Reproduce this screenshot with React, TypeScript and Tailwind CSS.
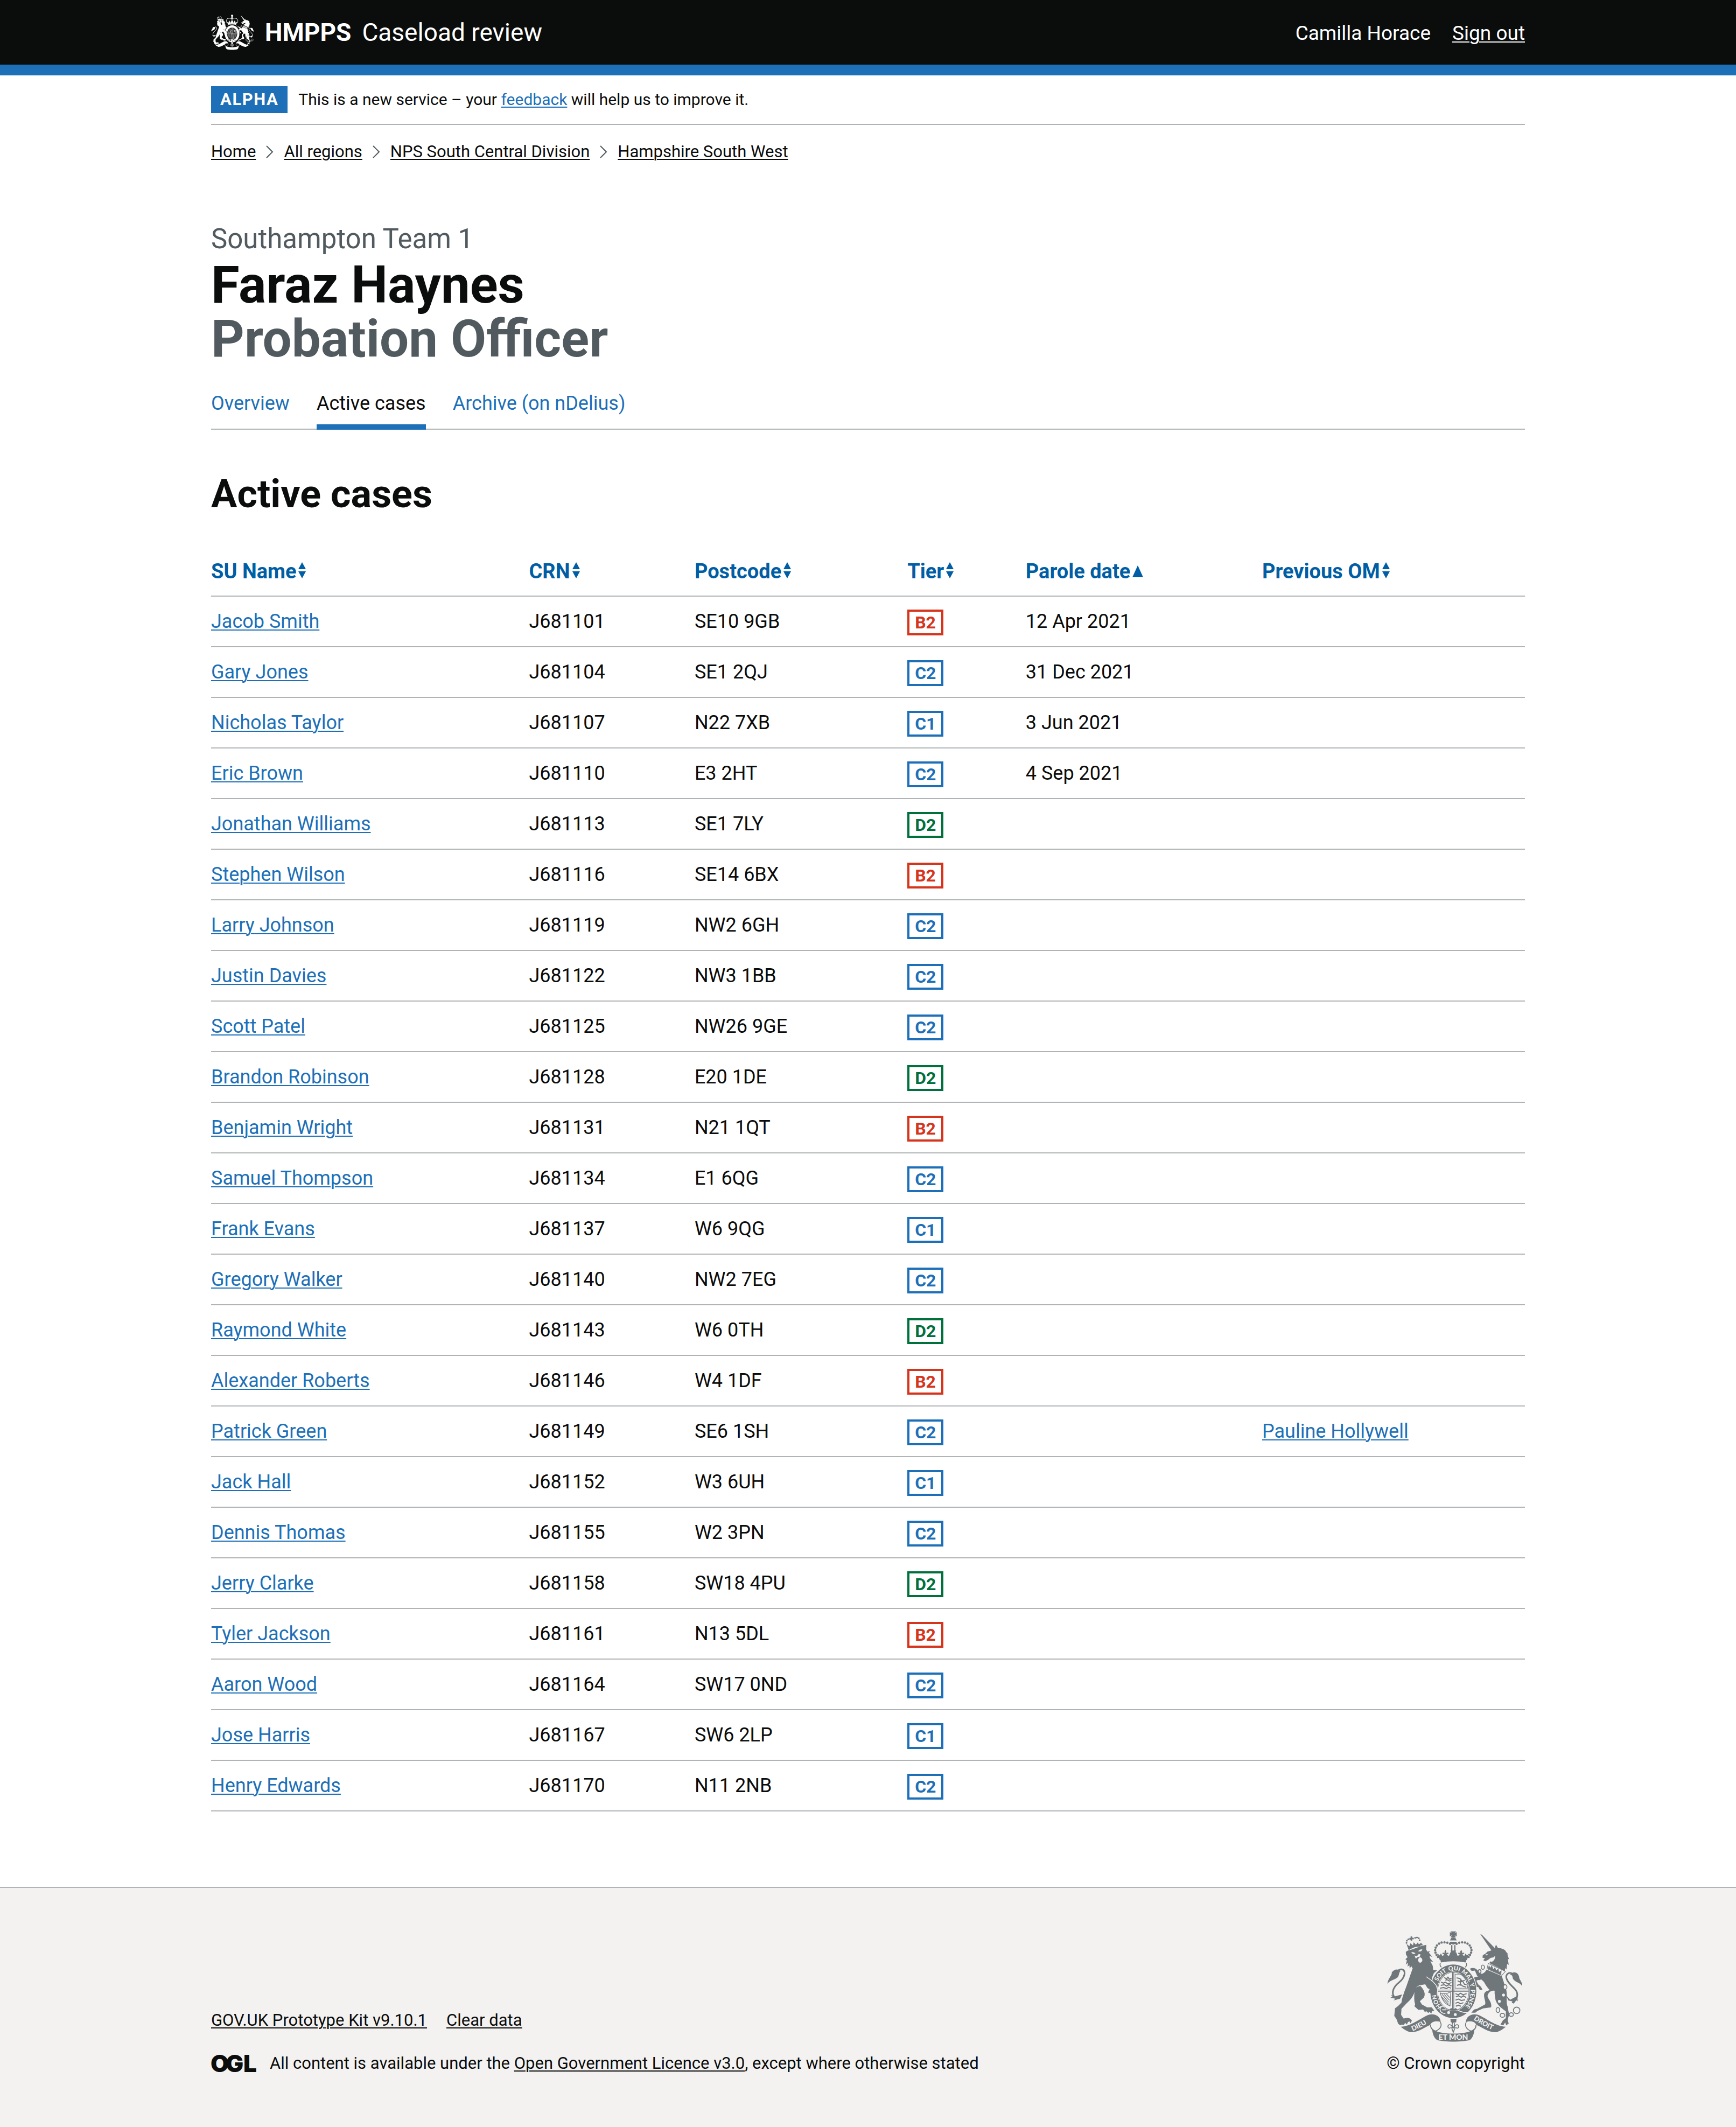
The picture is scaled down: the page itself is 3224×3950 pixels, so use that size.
import React from "react";

type Tier = "B2" | "C1" | "C2" | "D2";

interface CaseRow {
  name: string;
  crn: string;
  postcode: string;
  tier: Tier;
  parole?: string;
  previous?: string;
}

const cases: CaseRow[] = [
  { name: "Jacob Smith", crn: "J681101", postcode: "SE10 9GB", tier: "B2", parole: "12 Apr 2021" },
  { name: "Gary Jones", crn: "J681104", postcode: "SE1 2QJ", tier: "C2", parole: "31 Dec 2021" },
  { name: "Nicholas Taylor", crn: "J681107", postcode: "N22 7XB", tier: "C1", parole: "3 Jun 2021" },
  { name: "Eric Brown", crn: "J681110", postcode: "E3 2HT", tier: "C2", parole: "4 Sep 2021" },
  { name: "Jonathan Williams", crn: "J681113", postcode: "SE1 7LY", tier: "D2" },
  { name: "Stephen Wilson", crn: "J681116", postcode: "SE14 6BX", tier: "B2" },
  { name: "Larry Johnson", crn: "J681119", postcode: "NW2 6GH", tier: "C2" },
  { name: "Justin Davies", crn: "J681122", postcode: "NW3 1BB", tier: "C2" },
  { name: "Scott Patel", crn: "J681125", postcode: "NW26 9GE", tier: "C2" },
  { name: "Brandon Robinson", crn: "J681128", postcode: "E20 1DE", tier: "D2" },
  { name: "Benjamin Wright", crn: "J681131", postcode: "N21 1QT", tier: "B2" },
  { name: "Samuel Thompson", crn: "J681134", postcode: "E1 6QG", tier: "C2" },
  { name: "Frank Evans", crn: "J681137", postcode: "W6 9QG", tier: "C1" },
  { name: "Gregory Walker", crn: "J681140", postcode: "NW2 7EG", tier: "C2" },
  { name: "Raymond White", crn: "J681143", postcode: "W6 0TH", tier: "D2" },
  { name: "Alexander Roberts", crn: "J681146", postcode: "W4 1DF", tier: "B2" },
  { name: "Patrick Green", crn: "J681149", postcode: "SE6 1SH", tier: "C2", previous: "Pauline Hollywell" },
  { name: "Jack Hall", crn: "J681152", postcode: "W3 6UH", tier: "C1" },
  { name: "Dennis Thomas", crn: "J681155", postcode: "W2 3PN", tier: "C2" },
  { name: "Jerry Clarke", crn: "J681158", postcode: "SW18 4PU", tier: "D2" },
  { name: "Tyler Jackson", crn: "J681161", postcode: "N13 5DL", tier: "B2" },
  { name: "Aaron Wood", crn: "J681164", postcode: "SW17 0ND", tier: "C2" },
  { name: "Jose Harris", crn: "J681167", postcode: "SW6 2LP", tier: "C1" },
  { name: "Henry Edwards", crn: "J681170", postcode: "N11 2NB", tier: "C2" },
];

const tierColours: Record<Tier, string> = {
  B2: "border-[#d4351c] text-[#d4351c]",
  C1: "border-[#1d70b8] text-[#1d70b8]",
  C2: "border-[#1d70b8] text-[#1d70b8]",
  D2: "border-[#00703c] text-[#00703c]",
};

const columns = [
  { label: "SU Name", width: "w-[24.2%]" },
  { label: "CRN", width: "w-[12.6%]" },
  { label: "Postcode", width: "w-[16.2%]" },
  { label: "Tier", width: "w-[9%]" },
  { label: "Parole date", width: "w-[18%]", sorted: true },
  { label: "Previous OM", width: "w-[20%]" },
];

const underline = "underline decoration-2 underline-offset-3";

const leftPearls = [
  [456, 147], [441, 141], [425, 139], [409, 140], [395, 146], [383, 156],
  [376, 168], [373, 182], [375, 196], [381, 209], [389, 220],
];

const garterWords = [
  { word: "HON", offset: 4 },
  { word: "SOIT", offset: 155 },
  { word: "QUI", offset: 241 },
  { word: "MAL", offset: 312 },
  { word: "Y", offset: 392 },
  { word: "PENSE", offset: 426 },
];

/** Royal coat of arms; `ink` is the drawing colour and `paper` the colour behind it. */
function Crest({ ink, paper, lettered, className }: { ink: string; paper: string; lettered?: boolean; className: string }) {
  return (
    <svg viewBox="106 76 754 616" className={className} aria-hidden="true" fontFamily="Lato, 'Liberation Sans', sans-serif">
      <g fill={ink}>
        {/* crown */}
        <path d="M458 78h32l-9 11 12-7v24l-12-7 8 12h-30l8-12-12 7v-24l12 7z" />
        <path d="M463 114q11-5 22 0l8 14h-38z" />
        <path d="M453 136h40q-2 14-19 15-18-1-21-15z" />
        {leftPearls.map(([x, y]) => (
          <React.Fragment key={x}>
            <circle cx={x} cy={y} r="6.5" />
            <circle cx={948 - x} cy={y} r="6.5" />
          </React.Fragment>
        ))}
        <path d="M462 154h7v34h-7zM479 154h7v34h-7z" />
        <path d="M385 200l14 12 6-12 8 14q8-2 10-8-10-2-10-8 8-4 12 2-2-10 5-20 8 10 6 20 5-6 12-2 0 6-10 8 4 6 12 8l8-20h4l-4-10h32l-4 10h4l8 20q8-2 12-8-10-2-10-8 7-4 12 2-2-10 6-20 7 10 5 20 4-6 12-2 0 6-10 8 2 6 10 8l8-14 6 12 14-12-14 38q-76-18-150 0z" />
        <path d="M402 234q72-18 144 0l-3 17q-70-14-138 0z" />
        {/* lion */}
        <path d="M211 206L210 192 222 184 245 178 300 158 324 153 323 178 330 190 346 188 338 196 358 220 342 214 344 226 362 248 347 244 360 270 362 292 384 294 366 310 356 334 354 350 374 370 386 398 384 424 372 438 362 424 352 436 346 424 334 418 342 400 330 392 318 372 284 378 262 392C260 426 246 450 214 478L186 508 184 542 198 562 220 558 234 562 244 574 236 588 230 578 222 582 216 596 206 586 200 598 188 596 180 600 168 592 158 564 146 548 150 506 168 492 186 474C190 440 204 410 216 376L248 284 240 270 232 286 230 266 220 274 222 252 210 262 216 240 208 232 220 222z" />
        <path d="M258 392C260 420 252 456 262 482L258 494 280 514 306 512 318 528 322 520 336 532 340 524 352 534 356 522 368 518 354 500 328 500 300 484 288 466 310 446C322 426 312 402 290 380z" />
        <path d="M226 182q36-22 78-28l-4-9q-40 6-78 26z" />
        <path d="M222 170l-8-22 16 12 6-16 14 12 4-18 12 14 12-14 4 14 14-12-6 22q-40 4-68 8z" />
        {[[214, 142], [216, 130], [224, 122], [234, 120], [250, 118], [262, 114], [272, 112], [282, 116], [287, 127]].map(([x, y]) => (
          <circle key={x} cx={x} cy={y} r="5" />
        ))}
        <path d="M237 106h8v7h6v7h-6v10h-8v-10h-6v-7h6z" />
        <path d="M180 298C166 284 144 288 132 306 136 322 110 338 108 370 120 350 148 348 164 334 174 324 170 310 180 298z" />
        <path d="M128 430L146 440 190 428 178 452 142 462 152 452 124 446 136 442z" />
        {/* unicorn */}
        <path d="M624 93L633 97 706 172 686 184z" />
        <path d="M684 184L704 172 711 151 722 170C744 172 758 176 768 190L764 188 780 206 774 206 784 234 777 230 782 264 773 258 770 290 762 282 760 304 744 296 730 290 700 278 674 254 684 240 706 226C692 220 680 224 668 236L652 244 640 238 650 228 636 224 638 210 652 202 664 190z" />
        <path d="M660 288L742 324C752 346 756 370 766 396 778 430 764 470 776 496L784 540 776 572 782 590 768 600 762 584 752 600 736 596 750 572 766 560 766 522C736 502 712 480 708 456 706 440 702 424 704 408 684 404 666 420 664 438 668 458 690 470 684 500L640 506 608 520 596 530 574 530 590 512 606 508 650 484C658 470 640 446 646 424 652 410 664 408 676 404 656 380 638 356 636 330z" />
        <path d="M660 292C640 318 624 320 614 302 604 284 586 276 566 286L576 298 594 296 606 324C622 340 640 342 656 338z" />
        <path d="M648 330C612 326 580 330 582 346L594 368 600 388 612 386 622 404 636 402 628 386 612 372 602 352C620 342 640 354 656 366z" />
        <path d="M788 318C812 294 834 308 840 330 838 346 860 358 857 384 846 358 816 364 804 338 804 326 798 318 788 318z" />
        <path d="M766 432L790 458 830 436 832 466 824 460 808 482 806 468 780 462z" />
        {/* motto ribbon */}
        <path d="M182 608C240 606 288 562 336 542 370 532 402 548 404 582 376 572 352 580 346 598 310 612 276 642 234 638 212 632 196 620 182 608z" />
        <path d="M766 608C708 606 660 562 612 542 578 532 546 548 544 582 572 572 596 580 602 598 638 612 672 642 714 638 736 632 752 620 766 608z" />
        <path d="M356 616C372 638 420 646 474 646S576 638 592 616C590 650 580 672 566 682 520 694 428 694 384 682 368 672 358 650 356 616z" />
        <path d="M458 562h34l-2 22h-30z" />
      </g>
      <g fill="none" stroke={ink} strokeWidth="9" strokeLinecap="round">
        <path d="M146 442C126 416 146 382 172 362 206 336 214 294 188 289 178 288 168 294 162 302" />
        <path d="M804 472C834 452 838 420 814 396 790 372 766 350 768 326 774 308 790 304 802 314" />
      </g>
      <g fill="none" stroke={ink} strokeWidth="5">
        <path d="M348 598C346 616 362 632 376 632 404 620 412 600 402 582" />
        <path d="M600 598C602 616 586 632 572 632 544 620 536 600 546 582" />
        <path d="M402 253c-4 12-2 18 6 24M546 253c4 12 2 18-6 24" />
        <path d="M474 578c-10 14-8 24-2 34h4c6-10 8-20-2-34zM470 612c-8-20-26-20-26-4 2 10 10 10 14 4M478 612c8-20 26-20 26-4-2 10-10 10-14 4M460 614h28M466 618l8 20 8-20" />
        <ellipse cx="638" cy="277" rx="9" ry="12" />
        <ellipse cx="620" cy="301" rx="8" ry="10" />
        <ellipse cx="722" cy="515" rx="10" ry="14" />
        <ellipse cx="747" cy="544" rx="13" ry="11" />
        <ellipse cx="796" cy="540" rx="12" ry="10" />
        <circle cx="826" cy="517" r="18" />
      </g>
      {/* faces, collar and chain, cut out of the figures */}
      <g fill={paper}>
        <path d="M240 194q14-2 24 6-14 10-24-6zM278 188q12-12 24-10-6 16-24 10z" />
        <path d="M278 238q2-14 12-16 12 4 12 18-4 12-12 12-10-2-12-14z" />
        <path d="M258 212l14 4 10-12 10 2-4 12-14 4-8 8z" />
        <path d="M668 236q22-4 38-22 2 26-20 34z" />
        <circle cx="753" cy="432" r="8" />
        <circle cx="730" cy="467" r="8" />
        <path d="M666 252L674 254 764 300 742 326 658 290z" />
        <path d="M650 210q8-8 16-4-4 8-16 4z" />
      </g>
      <path d="M668 256L764 300 744 322 662 286z" fill="none" stroke={ink} strokeWidth="3" />
      <g fill={ink}>
        <path d="M666 286l6-20 8 14 8-14 8 22 10-12 6 20 12-12 4 20 14-10-2 26z" />
      </g>
      <g fill="none" stroke={paper} strokeWidth="4">
        <ellipse cx="628" cy="360" rx="8" ry="12" />
      </g>
      <ellipse cx="762" cy="387" rx="10" ry="13" fill={paper} stroke={ink} strokeWidth="5" />
      {/* garter and quartered shield */}
      <ellipse cx="474" cy="411" rx="132" ry="153" fill={paper} />
      <ellipse cx="474" cy="411" rx="128" ry="149" fill={ink} />
      <ellipse cx="474" cy="411" rx="91" ry="110" fill={paper} />
      <ellipse cx="474" cy="411" rx="87" ry="106" fill="none" stroke={ink} strokeWidth="3" />
      <g fill="none" stroke={ink} strokeWidth="4">
        <path d="M388 404h172M388 411h172M470 305v206M477 305v206" />
        <path d="M484 316h36q30 22 34 78h-70z" strokeWidth="3" />
        <path d="M402 420q30 10 58-6l-4 78q-42-16-54-72zM412 428l36 44M424 428l28 32M436 426l18 20M408 440l40 44" />
      </g>
      <g fill="none" stroke={ink} strokeWidth="6" strokeLinejoin="round">
        <path d="M424 334l12 8 8-10 8 12 12-6M430 350l10-4 12 8 12-6M406 360l14 6 10-6 14 10 20-8M404 378l20-4 12 8 14-8 14 8M400 394l20-4 16 6 12-8 14 6" />
        <path d="M492 336l18 4 12 14 16-4M498 352l14 8 14-6 10 18 12 2M494 378l20-6 12 10 20 6M516 340l-4 40" />
        <path d="M486 424l16 6 12-8 14 8 20-6M488 442l14-6 16 8 12-8 16 10M486 460l18-6 14 8 22-4M486 478l14-6 14 8 16-6M488 494l14-6 14 6" />
      </g>
      <path d="M462 504q14 10 26 0l10 10q-24 8-48 0z" fill={ink} />
      <g fill={paper}>
        <circle cx="448" cy="529" r="8" />
        <circle cx="485" cy="540" r="8" />
      </g>
      <g fill="none" stroke={paper} strokeWidth="5">
        <path d="M432 494q-30-6-32 18 4 22 30 22M412 514h22M500 516q26 16 60 12" />
      </g>
      <path d="M322 334L356 356 374 374 384 400 382 426 372 436 362 424 352 434 346 420 336 416 344 398 326 380z" fill={ink} />
      <path d="M324 330L358 354 378 376 387 402 384 430" fill="none" stroke={paper} strokeWidth="4" />
      {lettered ? (
        <g fill={paper} fontWeight="900">
          <defs>
            <path id="crest-garter" d="M412 501A97 117 0 1 1 520 514" />
            <path id="crest-dieu" d="M248 632Q300 612 356 570" />
            <path id="crest-droit" d="M586 568Q640 606 712 634" />
          </defs>
          {garterWords.map((g) => (
            <text key={g.word} fontSize="33">
              <textPath href="#crest-garter" startOffset={g.offset}>{g.word}</textPath>
            </text>
          ))}
          <text fontSize="38">
            <textPath href="#crest-dieu">DIEU</textPath>
          </text>
          <text fontSize="38">
            <textPath href="#crest-droit">DROIT</textPath>
          </text>
          <text x="474" y="681" fontSize="42" textAnchor="middle">ET MON</text>
        </g>
      ) : null}
    </svg>
  );
}

function SortIcon({ sorted }: { sorted?: boolean }) {
  return sorted ? (
    <svg viewBox="0 0 20 22" className="h-[22px] w-5" fill="currentColor" aria-hidden="true">
      <path d="M10 0l10 22H0z" />
    </svg>
  ) : (
    <svg viewBox="0 0 14 30" className="mb-1 h-[30px] w-3.5" fill="currentColor" aria-hidden="true">
      <path d="M7 0l7 13H0zM0 17h14L7 30z" />
    </svg>
  );
}

function Crumb({ label, first }: { label: string; first?: boolean }) {
  return (
    <li className="flex items-center">
      {first ? null : (
        <svg viewBox="0 0 14 24" className="mx-[19px] h-6 w-3.5" fill="none" stroke="#505a5f" strokeWidth="2" aria-hidden="true">
          <path d="M1 1l11 11L1 23" />
        </svg>
      )}
      <a href="#" className={underline}>{label}</a>
    </li>
  );
}

export default function App() {
  return (
    <div className="bg-white font-[Roboto,'Liberation_Sans',sans-serif] text-[36px] leading-[50px] text-[#0b0c0c]">
      <header className="border-b-[20px] border-[#1d70b8] bg-[#0b0c0c] text-white">
        <div className="mx-auto flex h-[120px] max-w-[2440px] items-center justify-between">
          <a href="#" className="flex items-center text-[46px] leading-[60px]">
            <Crest ink="#ffffff" paper="#0b0c0c" className="mr-5 h-[68px] w-20" />
            <span className="mr-5 font-bold">HMPPS</span>
            <span>Caseload review</span>
          </a>
          <nav className="flex gap-10 pt-1 text-[37px]" aria-label="Account">
            <span>Camilla Horace</span>
            <a href="#" className={underline}>Sign out</a>
          </nav>
        </div>
      </header>

      <div className="mx-auto max-w-[2440px]">
        <div className="flex items-center border-b-2 border-[#b1b4b6] py-5 text-[30px] leading-[50px]">
          <strong className="mr-5 bg-[#1d70b8] px-[17px] text-[31px] tracking-wider text-white">ALPHA</strong>
          <p>
            This is a new service – your{" "}
            <a href="#" className={`text-[#1d70b8] ${underline}`}>feedback</a> will help us to improve it.
          </p>
        </div>
        <nav aria-label="Breadcrumb" className="pt-[30px] text-[31px] leading-10">
          <ol className="flex">
            <Crumb label="Home" first />
            <Crumb label="All regions" />
            <Crumb label="NPS South Central Division" />
            <Crumb label="Hampshire South West" />
          </ol>
        </nav>

        <main>
          <span className="mt-28 block text-[51px] leading-[60px] text-[#505a5f]">Southampton Team 1</span>
          <h1 className="mt-[5px] text-[96px] leading-[100px] font-bold">
            Faraz Haynes
            <span className="block text-[#505a5f]">Probation Officer</span>
          </h1>

          <nav aria-label="Sub navigation" className="mt-5 shadow-[inset_0_-2px_0_#b1b4b6]">
            <ul className="flex gap-[50px]">
              <li><a href="#" className="block pt-[25px] pb-6 text-[#1d70b8]">Overview</a></li>
              <li><a href="#" aria-current="page" className="block border-b-[10px] border-[#1d70b8] pt-[25px] pb-3.5">Active cases</a></li>
              <li><a href="#" className="block pt-[25px] pb-6 text-[#1d70b8]">Archive (on nDelius)</a></li>
            </ul>
          </nav>

          <h2 className="mt-20 text-[72px] leading-[80px] font-bold">Active cases</h2>

          <table className="mt-[58px] w-full table-fixed border-collapse text-left">
            <thead>
              <tr className="border-b-2 border-[#b1b4b6]">
                {columns.map((c) => (
                  <th key={c.label} scope="col" className={`${c.width} py-5 font-bold text-[#005ea5]`} aria-sort={c.sorted ? "ascending" : "none"}>
                    <button type="button" className="flex items-center gap-1 text-[38px] leading-[50px]">
                      {c.label}
                      <SortIcon sorted={c.sorted} />
                    </button>
                  </th>
                ))}
              </tr>
            </thead>
            <tbody>
              {cases.map((c) => (
                <tr key={c.crn} className="h-[94px] border-b-2 border-[#b1b4b6]">
                  <td><a href="#" className={`text-[#1d70b8] ${underline}`}>{c.name}</a></td>
                  <td>{c.crn}</td>
                  <td>{c.postcode}</td>
                  <td>
                    <strong className={`mt-1 block w-fit border-4 px-2.5 text-[32px] leading-10 ${tierColours[c.tier]}`}>{c.tier}</strong>
                  </td>
                  <td>{c.parole}</td>
                  <td>{c.previous ? <a href="#" className={`text-[#1d70b8] ${underline}`}>{c.previous}</a> : null}</td>
                </tr>
              ))}
            </tbody>
          </table>
        </main>
      </div>

      <footer className="mt-[140px] border-t-2 border-[#b1b4b6] bg-[#f3f2f1] pt-20 pb-[98px] text-[31px] leading-10">
        <div className="mx-auto flex max-w-[2440px] items-end justify-between">
          <div>
            <ul className="mb-10 flex gap-9">
              <li><a href="#" className={underline}>GOV.UK Prototype Kit v9.10.1</a></li>
              <li><a href="#" className={underline}>Clear data</a></li>
            </ul>
            <div className="flex items-center">
              <svg viewBox="0 0 82 34" className="mr-[27px] h-[34px] w-[82px] overflow-visible" role="img" aria-label="Open Government Licence" fill="#0b0c0c">
                <text x="-1 27 60" y="33" fontFamily="Inter, sans-serif" fontWeight="900" fontSize="44">OGL</text>
              </svg>
              <p>
                All content is available under the{" "}
                <a href="#" className={underline}>Open Government Licence v3.0</a>, except where otherwise stated
              </p>
            </div>
          </div>
          <a href="#" className="flex flex-col items-end">
            <Crest ink="#6f777b" paper="#f3f2f1" lettered className="mr-1 mb-5 h-[206px] w-[252px]" />
            © Crown copyright
          </a>
        </div>
      </footer>
    </div>
  );
}
